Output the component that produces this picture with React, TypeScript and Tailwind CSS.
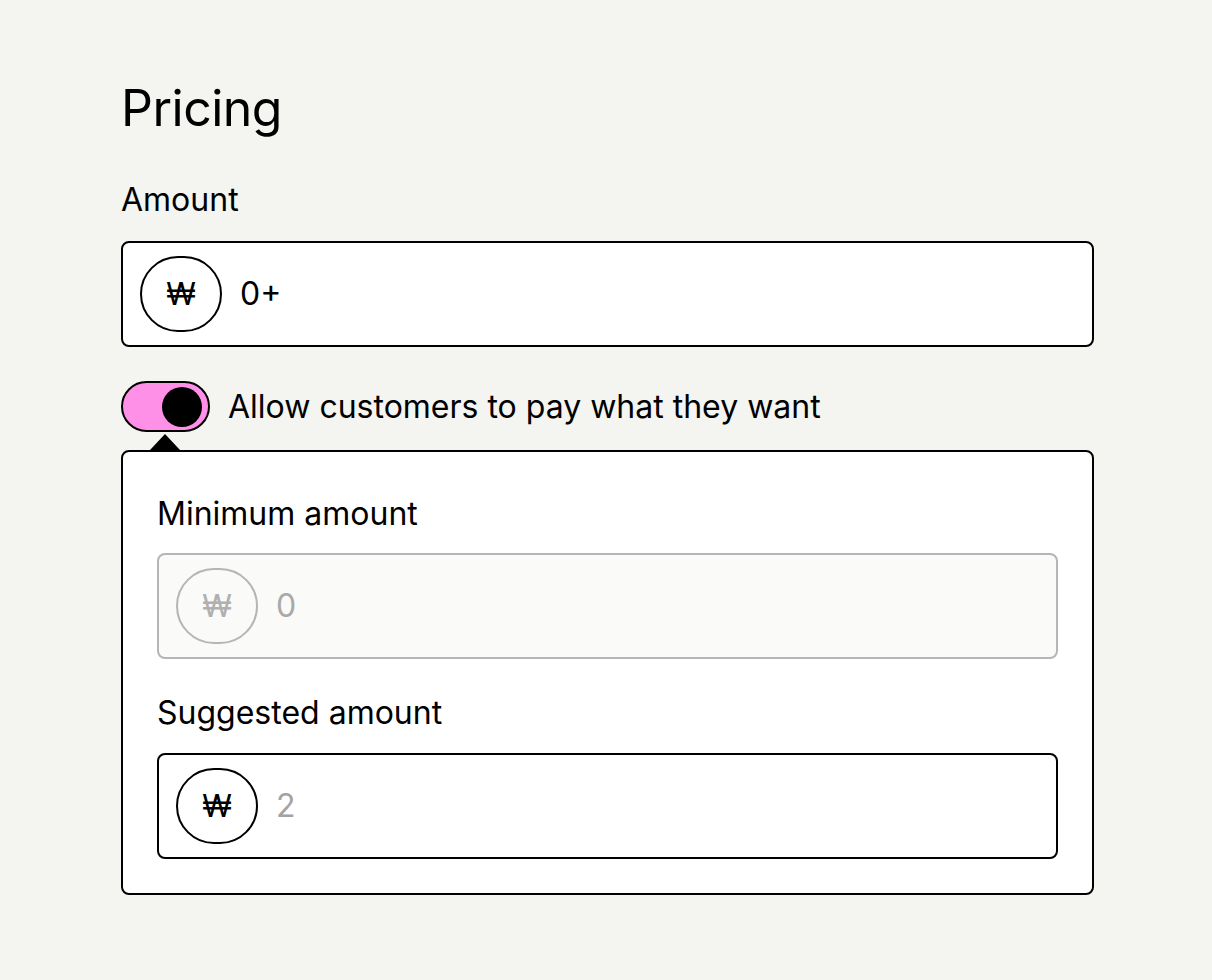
import clsx from 'clsx';

function PriceInput({ value, placeholder, disabled }: { value?: string; placeholder?: string; disabled?: boolean }) {
    return (
        <div
            className={clsx(
                "h-[106px] rounded-lg border-2 flex items-center gap-[18px] px-[17px]",
                disabled ? "bg-[#fafaf8] border-[#b5b5b5]" : "bg-white border-black"
            )}
        >
            <div
                className={clsx(
                    "w-[82px] h-[76px] rounded-full border-2 flex items-center justify-center text-[31px] shrink-0",
                    disabled ? "border-[#b5b5b5] text-[#b0b0b0]" : "border-black text-black"
                )}
            >
                ₩
            </div>
            {value !== undefined ? (
                <span className={clsx("text-[32px]", disabled ? "text-[#a9a9a9]" : "text-black")}>{value}</span>
            ) : (
                <span className="text-[32px] text-[#a3a3a3]">{placeholder}</span>
            )}
        </div>
    );
}

export default function App() {
    return (
        <div className="min-h-screen bg-[#f4f4f0] text-black font-['Inter',sans-serif]">
            <div className="w-[973px] ml-[121px] pt-[78px] flex flex-col">
                {/* Heading */}
                <h1 className="text-[50px] leading-[60px] font-normal tracking-[-0.5px]">Pricing</h1>

                {/* Amount */}
                <label className="mt-[42px] text-[32px] leading-[40px]">Amount</label>
                <div className="mt-[21px]">
                    <PriceInput value="0+" />
                </div>

                {/* Toggle */}
                <div className="mt-[34px] flex items-center gap-[18px]">
                    <div className="w-[89px] h-[51px] rounded-full border-2 border-black bg-[#ff90e8] flex items-center justify-end pr-[6px]">
                        <div className="w-[40px] h-[40px] rounded-full bg-black" />
                    </div>
                    <span className="text-[32px] leading-[40px]">Allow customers to pay what they want</span>
                </div>

                {/* Panel */}
                <div className="mt-[2px] ml-[29px] w-0 h-0 border-l-[15px] border-r-[15px] border-b-[16px] border-l-transparent border-r-transparent border-b-black" />
                <div className="bg-white border-2 border-black rounded-lg px-[34px] pt-[42px] pb-[34px] flex flex-col">
                    <label className="text-[32px] leading-[40px]">Minimum amount</label>
                    <div className="mt-[19px]">
                        <PriceInput value="0" disabled />
                    </div>
                    <label className="mt-[34px] text-[32px] leading-[40px]">Suggested amount</label>
                    <div className="mt-[20px]">
                        <PriceInput placeholder="2" />
                    </div>
                </div>
            </div>
        </div>
    );
}
